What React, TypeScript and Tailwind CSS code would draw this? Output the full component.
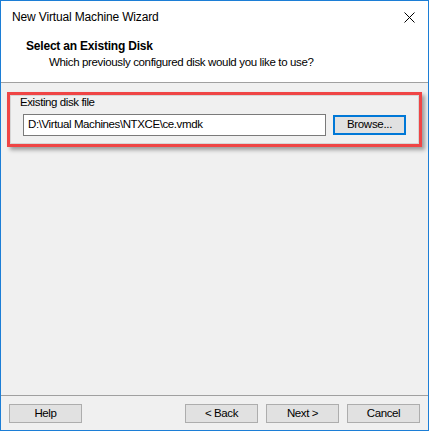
import React from "react";

function Btn({ label, className = "" }: { label: string; className?: string }) {
  return (
    <div
      className={`w-[73px] h-[19px] flex items-center justify-center bg-[#e1e1e1] border border-[#adadad] text-[11.5px] tracking-[-0.4px] text-black ${className}`}
    >
      {label}
    </div>
  );
}

export default function App() {
  return (
    <div className="w-[430px] h-[432px] bg-white" style={{ fontFamily: '"Liberation Sans", Arial, sans-serif' }}>
      <div className="w-[429px] h-[431px] border border-[#1c7ed6] flex flex-col bg-[#f0f0f0]">
        {/* title bar */}
        <div className="h-[31px] bg-white flex items-center justify-between pl-[11px] pr-[13px]">
          <span className="text-[12px] tracking-[-0.15px] text-black">New Virtual Machine Wizard</span>
          <svg width="11" height="11" viewBox="0 0 11 11" className="mt-[1px]">
            <path d="M0.5 0.5 L10.5 10.5 M10.5 0.5 L0.5 10.5" stroke="#000" strokeWidth="1" />
          </svg>
        </div>
        {/* header */}
        <div className="h-[51px] bg-white border-b border-[#a0a0a0] pl-[25px] pt-[7px]">
          <div className="text-[12px] font-bold leading-[15px] tracking-[-0.2px] text-black">Select an Existing Disk</div>
          <div className="text-[11.5px] leading-[15px] tracking-[-0.35px] text-black pl-[23px] mt-[1px]">
            Which previously configured disk would you like to use?
          </div>
        </div>
        {/* body */}
        <div className="flex-1 px-[6px] pt-[9px]">
          <div className="border-[3px] border-[#ef4545] shadow-[3px_3px_4px_rgba(0,0,0,0.35)]">
            <div className="border border-[#d6d6d6] pl-[9px] pr-[8px] pb-[7px]">
              <div className="text-[11.5px] leading-[12px] h-[12px] tracking-[-0.4px] text-black">Existing disk file</div>
              <div className="flex items-start mt-[6px]">
                <div className="ml-[3px] w-[303px] h-[22px] bg-white border border-[#7a7a7a] flex items-center pl-[4px] text-[11.5px] tracking-[-0.4px] text-black">
                  D:\Virtual Machines\NTXCE\ce.vmdk
                </div>
                <div className="ml-[7px] mt-[1px] w-[73px] h-[20px] bg-[#e1e1e1] border-2 border-[#0078d7] flex items-center justify-center text-[11.5px] tracking-[-0.3px] text-black">
                  Browse...
                </div>
              </div>
            </div>
          </div>
        </div>
        {/* footer */}
        <div className="h-[35px] border-t border-[#a0a0a0] flex items-start pt-[8px] px-[8px]">
          <Btn label="Help" />
          <div className="flex-1" />
          <Btn label="< Back" />
          <Btn label="Next >" className="ml-[8px]" />
          <Btn label="Cancel" className="ml-[8px]" />
        </div>
      </div>
    </div>
  );
}
